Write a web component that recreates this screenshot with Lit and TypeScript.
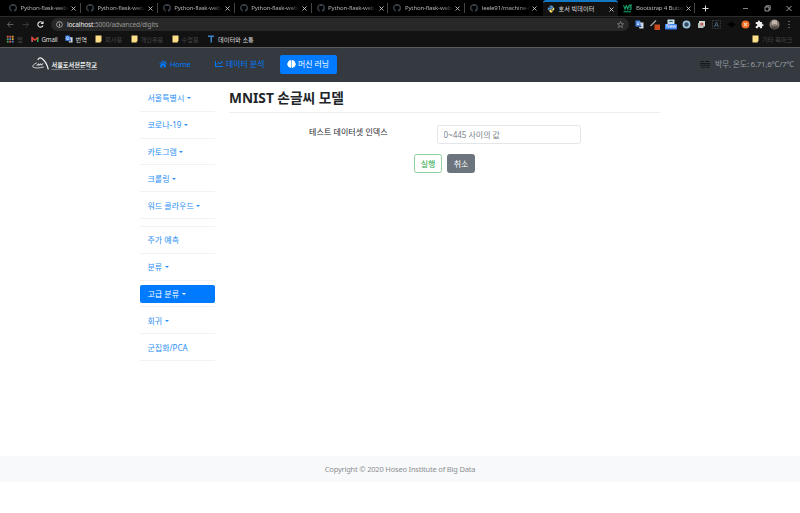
import { LitElement, html, css, svg, nothing } from "lit";
import { customElement, property } from "lit/decorators.js";

const octocat = html`<svg class="ico" viewBox="0 0 16 16" width="8" height="8"><path fill="#39424a" d="M8 0C3.580 0 0 3.580 0 8c0 3.540 2.290 6.530 5.470 7.590.4.070.55-.17.55-.38v-1.490c-2.010.37-2.530-.49-2.690-.94-.09-.23-.48-.94-.82-1.130-.28-.15-.68-.52-.01-.53.63-.01 1.080.58 1.230.82.72 1.210 1.870.87 2.330.66.07-.52.28-.87.51-1.070-1.780-.2-3.640-.89-3.640-3.950 0-.87.31-1.590.82-2.150-.08-.2-.36-1.020.08-2.120 0 0 .67-.21 2.200.82a7.600 7.600 0 0 1 4 0c1.530-1.040 2.200-.82 2.200-.82.44 1.100.16 1.920.08 2.120.51.56.82 1.270.82 2.150 0 3.070-1.870 3.750-3.650 3.950.29.25.54.73.54 1.480v2.200c0 .21.15.46.55.38A8 8 0 0 0 8 0z"/></svg>`;
const python = html`<svg class="ico" viewBox="0 0 16 16" width="8" height="8"><path fill="#4a8fcb" d="M8 1C5 1 5 2 5 4h3v1H3C1 5 1 11 3 11h2V9q0-1 2-1h3q2 0 2-2V3q0-2-4-2z"/><path fill="#ffe066" d="M8 15c3 0 3-1 3-3H8v-1h5c2 0 2-6 0-6h-1v2q0 2-2 2H7q-2 0-2 2v2q0 2 3 2z"/></svg>`;
const w3 = html`<svg class="ico" viewBox="0 0 16 16" width="9" height="9"><path fill="none" stroke="#14a06c" stroke-width="2" d="M1 2l2.500 7L6 3l2.500 6L11 2M11 2h4l-2.500 3q3 0 2 3t-3 1"/><path fill="#0c7a50" d="M1 12h13v3H1z"/></svg>`;
const cross = html`<svg class="close" viewBox="0 0 6 6" width="5" height="5"><path stroke="#d5d5d5" stroke-width="1" d="M.6.600l4.800 4.800M5.400.600L.6 5.400"/></svg>`;
const folder = html`<svg width="7" height="8" viewBox="0 0 7 8"><path fill="#ffe08a" d="M.5.500h6v5.800h-.8v1.200H.500z"/></svg>`;
const translate = html`<svg width="8" height="8" viewBox="0 0 18 18"><path fill="#4285f4" d="M1 1h9l4 12H1z"/><path fill="#d4d8de" d="M11 5h6v12H9l-1-3h6z"/><path fill="none" stroke="#fff" stroke-width="1.500" d="M8 5.500a3 3 0 1 0 .5 3H6"/></svg>`;

@customElement("browser-tab")
class BrowserTab extends LitElement {
  @property() label = "";
  @property() kind = "git";
  @property({ type: Boolean, reflect: true }) active = false;
  static styles = css`
    :host { box-sizing: border-box; width: 76.900px; height: 16px; display: flex; align-items: center; padding-left: 5px; flex: none; font-size: 6.100px; letter-spacing: -.19px; color: #b0b0b0; }
    :host([active]) { background: #121212; border-top: 2px solid #1478c0; border-radius: 3px 3px 0 0; color: #ddd; width: 75.500px; padding-left: 4px; letter-spacing: .1px; }
    .ico { flex: none; margin-right: 3.500px; }
    .t { width: 48px; white-space: nowrap; line-height: 10px; flex: none; }
    :host(:not([active])) .t { -webkit-mask-image: linear-gradient(90deg, #000 75%, rgba(0, 0, 0, .15) 98%); }
    .close { margin-left: 2.500px; flex: none; }
    .end { margin-left: auto; width: 1px; height: 10px; background: #444; }
  `;
  render() {
    const icon = this.kind === "py" ? python : this.kind === "w3" ? w3 : octocat;
    return html`${icon}<span class="t">${this.label}</span>${cross}${this.active || this.kind === "last" ? nothing : html`<i class="end"></i>`}`;
  }
}

@customElement("browser-chrome")
class BrowserChrome extends LitElement {
  static styles = css`
    :host { display: block; height: 48px; background: #121212; font-family: "Noto Sans", "Noto Sans CJK KR", sans-serif; overflow: hidden; box-sizing: border-box; border-bottom: 1px solid #5c5c5c; }
    .tabs { height: 16px; display: flex; background: #000; align-items: center; padding-left: 4px; }
    .current { margin-left: .7px; }
    .plus { margin-left: 7px; }
    .win { display: flex; margin-left: auto; gap: 15px; padding-right: 8px; align-items: center; }
    .bar { height: 16.500px; display: flex; align-items: center; border-top: 1px solid #2b2b2b; box-sizing: border-box; padding-left: 6px; }
    .nav { display: flex; gap: 6px; width: 45px; }
    .url { box-sizing: border-box; width: 578px; height: 13px; border-radius: 7px; background: #282828; display: flex; align-items: center; padding: 0 5px; font-size: 6.500px; color: #999; }
    .url svg { flex: none; }
    .url span { margin-left: 4px; letter-spacing: -.13px; }
    .url b { color: #eee; font-weight: 400; }
    .star { margin-left: auto; }
    .ext { display: flex; margin-left: 6px; gap: 6px; align-items: center; }
    .ext svg { display: block; }
    .ext .tight { margin-left: -1px; }
    .marks { height: 13px; display: flex; align-items: center; padding: 0 6px; font-size: 6.200px; color: #484848; }
    .m { display: flex; align-items: center; gap: 3px; white-space: nowrap; box-sizing: border-box; flex: none; }
    .lit { color: #ddd; }
    .latin { letter-spacing: -.2px; }
    .other { margin-left: auto; }
  `;
  render() {
    const mark = (w: number, icon: unknown, text: string, cls = "") => html`<span class="m ${cls}" style="width:${w}px">${icon}<span>${text}</span></span>`;
    const dots = ["#e05a4a", "#e05a4a", "#e0b040", "#4aa060", "#5080d0", "#e0b040", "#4aa060", "#e05a4a", "#5080d0"];
    return html`
      <div class="tabs">
        ${[1, 2, 3, 4, 5, 6].map(() => html`<browser-tab label="Python-flask-web-"></browser-tab>`)}
        <browser-tab kind="last" label="leele91/machine-l"></browser-tab>
        <browser-tab class="current" active kind="py" label="호서 빅데이터"></browser-tab>
        <browser-tab kind="w3" label="Bootstrap 4 Butto"></browser-tab>
        <svg class="plus" width="7" height="7" viewBox="0 0 7 7"><path stroke="#ddd" d="M3.500.500v6M.500 3.500h6"/></svg>
        <span class="win">
          <svg width="6" height="7" viewBox="0 0 6 7"><path stroke="#bbb" stroke-width=".7" d="M0 3.500h5"/></svg>
          <svg width="7" height="7" viewBox="0 0 7 7"><path fill="none" stroke="#bbb" stroke-width=".8" d="M1 2h4v4H1zM2.200 2V.8h4v4H5"/></svg>
          <svg width="6" height="7" viewBox="0 0 6 7"><path stroke="#ccc" stroke-width=".8" d="M.5 1l5 5M5.500 1l-5 5"/></svg>
        </span>
      </div>
      <div class="bar">
        <span class="nav">
          <svg width="9" height="9" viewBox="0 0 9 9"><path fill="none" stroke="#686868" stroke-width=".9" d="M7.500 4.500h-6M4.300 1.700L1.500 4.500l2.800 2.800"/></svg>
          <svg width="9" height="9" viewBox="0 0 9 9"><path fill="none" stroke="#3d3d3d" stroke-width=".9" d="M1.500 4.500h6M4.700 1.700l2.800 2.800-2.800 2.800"/></svg>
          <svg width="9" height="9" viewBox="0 0 9 9"><path fill="none" stroke="#e8e8e8" stroke-width="1.100" d="M6.800 3A2.700 2.700 0 1 0 7 5.500"/><path fill="#e8e8e8" d="M7.500 1v3h-3z"/></svg>
        </span>
        <div class="url">
          <svg width="7" height="7" viewBox="0 0 7 7"><circle cx="3.500" cy="3.500" r="2.900" fill="none" stroke="#ccc" stroke-width=".7"/><path stroke="#ccc" stroke-width=".8" d="M3.500 3v2.300M3.500 1.700v.8"/></svg>
          <span><b>localhost</b>:5000/advanced/digits</span>
          <svg class="star" width="7" height="7" viewBox="0 0 16 16"><path fill="none" stroke="#999" stroke-width="1.500" d="M8 1l2 5 5 .4-4 3.400 1.400 5L8 12l-4.400 2.800L5 9.800 1 6.400 6 6z"/></svg>
        </div>
        <div class="ext">
          <svg width="9" height="9" viewBox="0 0 18 18"><path fill="#4b86e0" d="M1 1h9l4 12H1z"/><path fill="#cfd6e0" d="M10 5h7v12H9l-1-3h5z"/><path stroke="#fff" stroke-width="1.500" d="M4 6h5M4 9h4"/></svg>
          <svg width="10" height="11" viewBox="0 0 10 11"><path stroke="#aaa" stroke-width="1.300" d="M.5 7L6 1.500"/><path fill="#c94a1c" d="M4.500 5.500H10V11H4.500z"/></svg>
          <svg class="tight" width="12" height="11" viewBox="0 0 12 11"><path fill="#cce0ea" d="M2.500.500h7v6h-7z"/><path stroke="#4b8dad" stroke-width=".8" d="M4 3q2-2 4 0"/><rect y="5" width="12" height="5.500" rx=".8" fill="#3c83f2"/><text x="6" y="9.300" text-anchor="middle" font-size="4.800" fill="#fff" font-family="Noto Sans">New</text></svg>
          <svg class="tight" width="9" height="9" viewBox="0 0 9 9"><circle cx="4.500" cy="4.500" r="3.100" fill="#354b64" stroke="#9fc6de" stroke-width="1.700"/></svg>
          <svg width="9" height="9" viewBox="0 0 9 9"><path fill="#d8dbd9" d="M2 1h6v5.500H2z"/><path fill="#b9bdbb" d="M1 3h5.500v5H1z"/><circle cx="4.900" cy="4" r="1.500" fill="#c35b4b"/></svg>
          <svg width="9" height="9" viewBox="0 0 9 9"><path fill="none" stroke="#454b54" stroke-width=".8" stroke-dasharray="1.500 1" d="M.6.600h7.800v7.800H.6z"/><path fill="none" stroke="#4d6682" stroke-width=".9" d="M2.500 7l2-5 2 5M3.200 5.300h2.600"/></svg>
          <svg width="9" height="9" viewBox="0 0 9 9"><path fill="#000" d="M0 4.500l3.200-1.800L4.500 1l1.300 1.700L9 4.500 5.800 6 4.500 8 3.200 6z"/></svg>
          <svg class="tight" width="9" height="9" viewBox="0 0 9 9"><circle cx="4.500" cy="4.500" r="4" fill="#ef6b22"/><path stroke="#f3d8b8" stroke-width="1.100" d="M2.800 2.800l3.400 3.400M6.200 2.800L2.800 6.200"/></svg>
          <svg class="tight" width="9" height="9" viewBox="0 0 24 24"><path fill="#eee" d="M20.500 11H19V7a2 2 0 0 0-2-2h-4V3.500a2.500 2.500 0 0 0-5 0V5H4a2 2 0 0 0-2 2v3.800h1.500a2.700 2.700 0 0 1 0 5.400H2V20a2 2 0 0 0 2 2h3.800v-1.500a2.700 2.700 0 0 1 5.400 0V22H17a2 2 0 0 0 2-2v-4h1.500a2.500 2.500 0 0 0 0-5z"/></svg>
          <svg class="tight" width="11" height="11" viewBox="0 0 11 11"><circle cx="5.500" cy="5.500" r="5" fill="#857b73"/><path fill="#beb4aa" d="M3 2q3-2 5 0v4q-2-2-5 0z"/><path fill="#4d4641" d="M2 6q3 3 7 0l-1 4H3z"/></svg>
          <svg width="8" height="9" viewBox="0 0 8 9"><path fill="#aaa" d="M2.500 1h1v1h-1zM2.500 4h1v1h-1zM2.500 7h1v1h-1z"/></svg>
        </div>
      </div>
      <div class="marks">
        ${mark(24.5, html`<svg width="8" height="8" viewBox="0 0 8 8">${dots.map((c, i) => svg`<rect x=${0.8 + (i % 3) * 2.5} y=${0.8 + Math.floor(i / 3) * 2.5} width="1.800" height="1.800" fill=${c}/>`)}</svg>`, "앱")}
        ${mark(34, html`<svg width="8" height="7" viewBox="0 0 8 7"><path fill="#4285f4" d="M.5 1H2v5H.500z"/><path fill="#34a853" d="M6 1h1.500v5H6z"/><path fill="none" stroke="#ea4335" stroke-width="1.500" d="M1.200 5.800V1.700L4 4l2.800-2.300"/></svg>`, "Gmail", "lit latin")}
        ${mark(30.5, translate, "번역", "lit")}
        ${mark(35.5, folder, "회사용")}
        ${mark(41, folder, "개인유용")}
        ${mark(35.5, folder, "수업용")}
        ${mark(60, html`<svg width="8" height="8" viewBox="0 0 8 8"><path fill="#3a86c8" d="M1 .5h6V2H5v5.500H3.500V2H1z"/></svg>`, "데이터와 소통", "lit")}
        ${mark(42, folder, "기타 북마크", "other")}
      </div>`;
  }
}

@customElement("app-root")
class AppRoot extends LitElement {
  static styles = css`
    :host { display: block; height: 513px; overflow: hidden; background: #fff; font-family: "Noto Sans", "Noto Sans CJK KR", sans-serif; font-size: 8px; color: #212529; }
    .navbar { height: 33.500px; box-sizing: border-box; background: #343a40; display: flex; align-items: center; padding: 0 7px 1px 32px; color: #007bff; font-size: 7.900px; }
    .logo { width: 66px; height: 18px; margin-right: 53px; flex: none; }
    .link { box-sizing: border-box; display: flex; align-items: center; gap: 3px; padding: 0 8px; height: 19px; border-radius: 2px; white-space: nowrap; line-height: 10px; }
    .link svg { flex: none; }
    .home { width: 56px; font-size: 7.400px; letter-spacing: -.15px; }
    .data { width: 66px; margin-right: 7px; letter-spacing: .05px; }
    .on { background: #007bff; color: #fff; width: 57px; padding: 0 7px; gap: 2px; }
    .weather { margin-left: auto; display: flex; align-items: center; gap: 5px; color: #989ca0; white-space: nowrap; letter-spacing: -.22px; }
    .weather span { width: 78px; margin-top: -1px; }
    .body { height: 374px; box-sizing: border-box; padding: 3.500px 140px 0; display: flex; gap: 14px; }
    .side { width: 75px; flex: none; color: #2d8ff5; }
    .item { box-sizing: border-box; height: 26.800px; border-bottom: 1px solid #f1f2f3; padding: 4px 0 3px; }
    .item div { height: 18.800px; box-sizing: border-box; border-radius: 2px; padding-left: 7.500px; display: flex; align-items: center; gap: 2.500px; white-space: nowrap; line-height: 10px; }
    .item .sel { background: #007bff; color: #fff; }
    .gap { height: 8px; box-sizing: border-box; border-bottom: 1px solid #f1f2f3; }
    .caret { width: 0; border: 2.600px solid transparent; border-top-color: currentColor; border-bottom: 0; }
    .main { width: 431px; flex: none; }
    h1 { margin: 0; font-size: 13.700px; line-height: 25px; font-weight: 700; height: 27.500px; box-sizing: border-box; border-bottom: 1px solid #eeeff0; white-space: nowrap; }
    .row { display: flex; margin-top: 12.500px; padding-left: 80px; }
    label { width: 128px; line-height: 13px; letter-spacing: .08px; }
    input { width: 144px; height: 19px; box-sizing: border-box; border: 1px solid #e2e6e9; border-radius: 2.500px; padding: 0 5.500px; font: inherit; outline: 0; background: #fff; }
    input::placeholder { color: #7b838a; opacity: 1; }
    .btns { display: flex; gap: 5px; margin: 10px 0 0 185px; }
    button { width: 28px; height: 19px; box-sizing: border-box; font: inherit; padding: 0; border-radius: 2.500px; border: 1px solid #8fd19e; color: #28a745; background: #fff; line-height: 10px; }
    .cancel { background: #6c757d; border-color: #6c757d; color: #fff; }
    footer { height: 26px; background: #f8f9fa; color: #8c8f92; text-align: center; line-height: 27px; font-size: 7.500px; letter-spacing: -.19px; }
  `;
  render() {
    const item = (t: string, caret = true, sel = false) => html`<div class="item"><div class=${sel ? "sel" : ""}>${t}${caret ? html`<i class="caret"></i>` : nothing}</div></div>`;
    return html`
      <browser-chrome></browser-chrome>
      <nav class="navbar">
        <svg class="logo" viewBox="0 0 66 18"><g fill="none" stroke="#f2f2f2" stroke-linecap="round"><path stroke-width=".8" d="M4.500 8Q-.5 10.500 1 12Q4 14 11.500 12"/><path stroke-width="1.200" d="M6 4.500Q7.500 2 10 3.500Q14.500 7 16.200 14"/><path stroke-width="1" d="M5 10.500l1.500-1.800.5 1.800 1.500-1.800.5 1.500 2-1.500"/></g><text x="19.500" y="11.500" font-size="5.900" font-weight="700" fill="#f2f2f2" textLength="45.500" lengthAdjust="spacingAndGlyphs">서울호서전문학교</text><text x="19.500" y="15.200" font-size="2.300" font-weight="700" fill="#b9bcbf" textLength="45.500" lengthAdjust="spacingAndGlyphs">SEOUL HOSEO TECHNICAL COLLEGE</text></svg>
        <span class="link home"><svg width="8" height="8" viewBox="0 0 16 14"><path fill="currentColor" d="M8 0L0 7l1 1.200L8 2.200l7 6L16 7l-2.500-2.300V1h-2v2zM2.500 8.500V14h4v-4h3v4h4V8.500L8 3.800z"/></svg>Home</span>
        <span class="link data"><svg width="8" height="8" viewBox="0 0 16 16"><path fill="none" stroke="currentColor" stroke-width="2" d="M1 2v11h15M4 9l3-4 3 3 4-4"/><path fill="currentColor" d="M11 3h4v4z"/></svg>데이터 분석</span>
        <span class="link on"><svg width="9" height="8" viewBox="0 0 18 16"><path fill="currentColor" d="M8.500 1Q5-1 4 2 1 3 2 5q-3 3-.5 6Q2 14 4.500 14q3 3.500 4 0zM9.500 1Q13-1 14 2q3 1 2 3 3 3 .5 6-.5 3-3 3-3 3.500-4 0z"/></svg>머신 러닝</span>
        <span class="weather"><svg width="10" height="8" viewBox="0 0 10 8"><path stroke="#16191c" stroke-width="1.100" d="M.5 1.500h3.500M5 1.500h4.500M0 3.500h10M0 5.300h10M1 7.200h4M6 7.200h3.500"/></svg><span>박무, 온도: 6.71,6℃/7℃</span></span>
      </nav>
      <div class="body">
        <aside class="side">
          ${item("서울특별시")}${item("코로나-19")}${item("카토그램")}${item("크롤링")}${item("워드 클라우드")}
          <div class="gap"></div>
          ${item("주가 예측", false)}${item("분류")}${item("고급 분류", true, true)}${item("회귀")}${item("군집화/PCA", false)}
        </aside>
        <main class="main">
          <h1>MNIST 손글씨 모델</h1>
          <div class="row"><label>테스트 데이터셋 인덱스</label><input placeholder="0~445 사이의 값" /></div>
          <div class="btns"><button>실행</button><button class="cancel">취소</button></div>
        </main>
      </div>
      <footer>Copyright © 2020 Hoseo Institute of Big Data</footer>`;
  }
}
